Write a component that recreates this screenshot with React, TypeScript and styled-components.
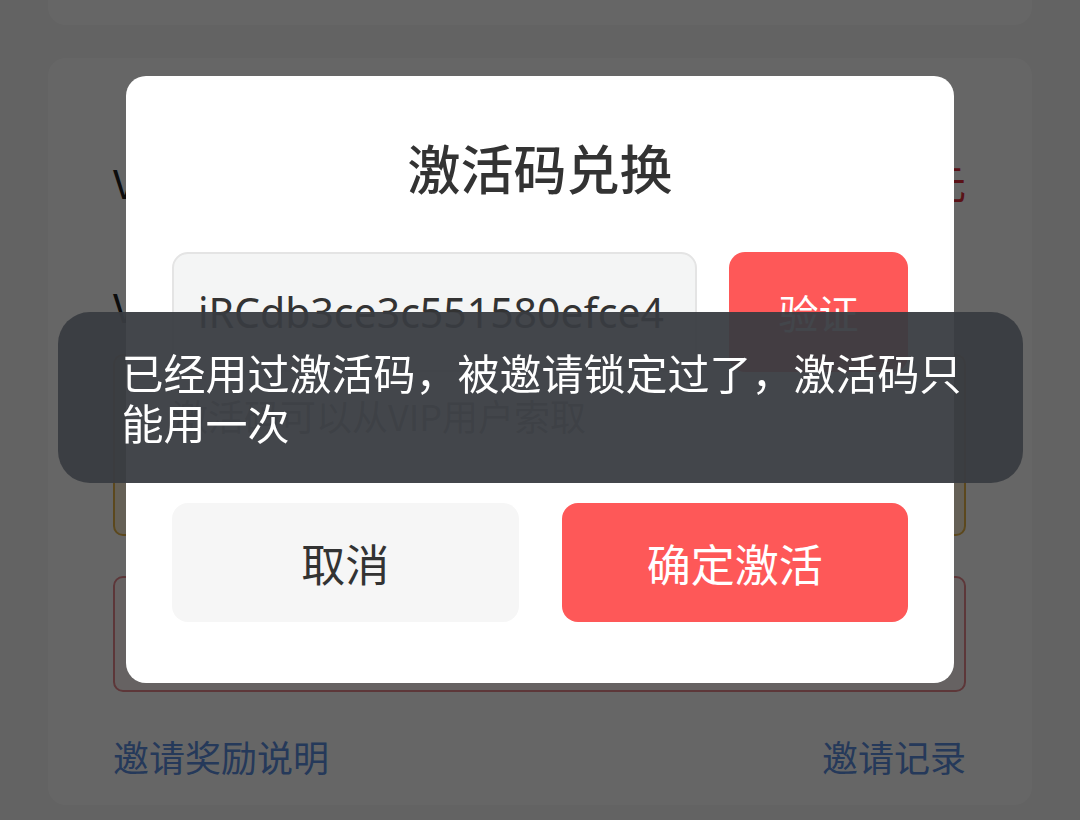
import React from "react";
import styled, { createGlobalStyle } from "styled-components";

const GlobalStyle = createGlobalStyle`
  html, body { margin: 0; padding: 0; }
  body {
    background: #f7f7f7;
    font-family: "Noto Sans CJK SC", "Noto Sans", sans-serif;
    width: 1080px;
    height: 820px;
    overflow: hidden;
  }
`;

const Page = styled.div`
  display: flex;
  flex-direction: column;
  padding: 0 48px;
  height: 820px;
  box-sizing: border-box;
`;

const TopCard = styled.div`
  height: 25px;
  background: #fff;
  border-radius: 0 0 18px 18px;
  overflow: hidden;
  display: flex;
  align-items: flex-start;
  padding: 0 42px;
  gap: 130px;
  color: #c4c4c4;
  font-size: 34px;
  line-height: 34px;
`;

const TopText = styled.span`
  margin-top: -36px;
`;

const MainCard = styled.div`
  margin-top: 33px;
  height: 747px;
  box-sizing: border-box;
  background: #fff;
  border-radius: 18px;
  padding: 100px 66px 24px 65px;
  display: flex;
  flex-direction: column;
`;

const InfoRow = styled.div<{ $gap?: number }>`
  display: flex;
  justify-content: space-between;
  align-items: center;
  height: 48px;
  margin-top: ${(p) => p.$gap ?? 0}px;
  font-size: 40px;
  color: #222;
`;

const Price = styled.span`
  color: #e02e3a;
`;

const NoticeBox = styled.div`
  margin-top: 24px;
  height: 182px;
  border: 2px solid #e7b54a;
  background: #fdf1d6;
  border-radius: 10px;
  box-sizing: border-box;
`;

const CodeBox = styled.div`
  margin-top: 40px;
  height: 116px;
  border: 2px solid #e8898f;
  background: #fff6f6;
  border-radius: 10px;
  box-sizing: border-box;
`;

const LinkRow = styled.div`
  margin-top: 40px;
  display: flex;
  justify-content: space-between;
  align-items: center;
  height: 48px;
  font-size: 36px;
  color: #5d8fe0;
`;

const Overlay = styled.div`
  position: fixed;
  inset: 0;
  background: rgba(0, 0, 0, 0.6);
  display: flex;
  justify-content: center;
  align-items: flex-start;
  padding-top: 76px;
  box-sizing: border-box;
`;

const Dialog = styled.div`
  width: 828px;
  background: #fff;
  border-radius: 20px;
  padding: 55px 46px 61px;
  box-sizing: border-box;
  display: flex;
  flex-direction: column;
`;

const Title = styled.div`
  text-align: center;
  font-size: 53px;
  line-height: 72px;
  font-weight: 500;
  color: #333;
`;

const InputRow = styled.div`
  margin-top: 49px;
  display: flex;
  gap: 32px;
  height: 120px;
`;

const CodeField = styled.div`
  flex: 0 0 525px;
  box-sizing: border-box;
  background: #f4f5f5;
  border: 2px solid #e4e4e4;
  border-radius: 16px;
  overflow: hidden;
  display: flex;
  align-items: center;
  padding-left: 26px;
  font-family: "Noto Sans", "Noto Sans CJK SC", sans-serif;
  font-size: 41px;
  color: #333;
  white-space: nowrap;
`;

const CodeText = styled.span`
  margin-left: -2px;
`;

const Button = styled.button<{ $primary?: boolean }>`
  border: none;
  border-radius: 16px;
  background: ${(p) => (p.$primary ? "#fe5858" : "#f6f6f6")};
  color: ${(p) => (p.$primary ? "#fff" : "#333")};
  font-family: "Noto Sans CJK SC", sans-serif;
  font-size: 44px;
  padding: 0;
  cursor: pointer;
  display: flex;
  align-items: center;
  justify-content: center;
`;

const VerifyButton = styled(Button)`
  flex: 1;
  font-size: 40px;
`;

const Hint = styled.div`
  margin-top: 18px;
  font-size: 36px;
  line-height: 50px;
  color: #999;
`;

const ButtonRow = styled.div`
  margin-top: 63px;
  display: flex;
  gap: 43px;
  height: 119px;
`;

const ActionButton = styled(Button)`
  flex: 1;
`;

const ToastLayer = styled.div`
  position: fixed;
  inset: 0;
  display: flex;
  justify-content: center;
  align-items: flex-start;
  padding-top: 312px;
  box-sizing: border-box;
  pointer-events: none;
`;

const Toast = styled.div`
  width: 965px;
  height: 171px;
  box-sizing: border-box;
  background: rgba(57, 60, 65, 0.95);
  border-radius: 32px;
  padding: 35px 48px 0 64px;
  color: #fff;
  font-size: 42px;
  line-height: 50px;
`;

export default function App() {
  return (
    <>
      <GlobalStyle />
      <Page>
        <TopCard>
          <TopText>我的邀请</TopText>
          <TopText>已邀请人数 0 人</TopText>
        </TopCard>
        <MainCard>
          <InfoRow>
            <span>VIP会员价格</span>
            <Price>¥99元</Price>
          </InfoRow>
          <InfoRow $gap={76}>
            <span>VIP有效期至</span>
          </InfoRow>
          <NoticeBox />
          <CodeBox />
          <LinkRow>
            <span>邀请奖励说明</span>
            <span>邀请记录</span>
          </LinkRow>
        </MainCard>
      </Page>
      <Overlay>
        <Dialog>
          <Title>激活码兑换</Title>
          <InputRow>
            <CodeField>
              <CodeText>iRCdb3ce3c551580efce4</CodeText>
            </CodeField>
            <VerifyButton $primary>验证</VerifyButton>
          </InputRow>
          <Hint>激活码可以从VIP用户索取</Hint>
          <ButtonRow>
            <ActionButton>取消</ActionButton>
            <ActionButton $primary>确定激活</ActionButton>
          </ButtonRow>
        </Dialog>
      </Overlay>
      <ToastLayer>
        <Toast>已经用过激活码，被邀请锁定过了，激活码只能用一次</Toast>
      </ToastLayer>
    </>
  );
}
